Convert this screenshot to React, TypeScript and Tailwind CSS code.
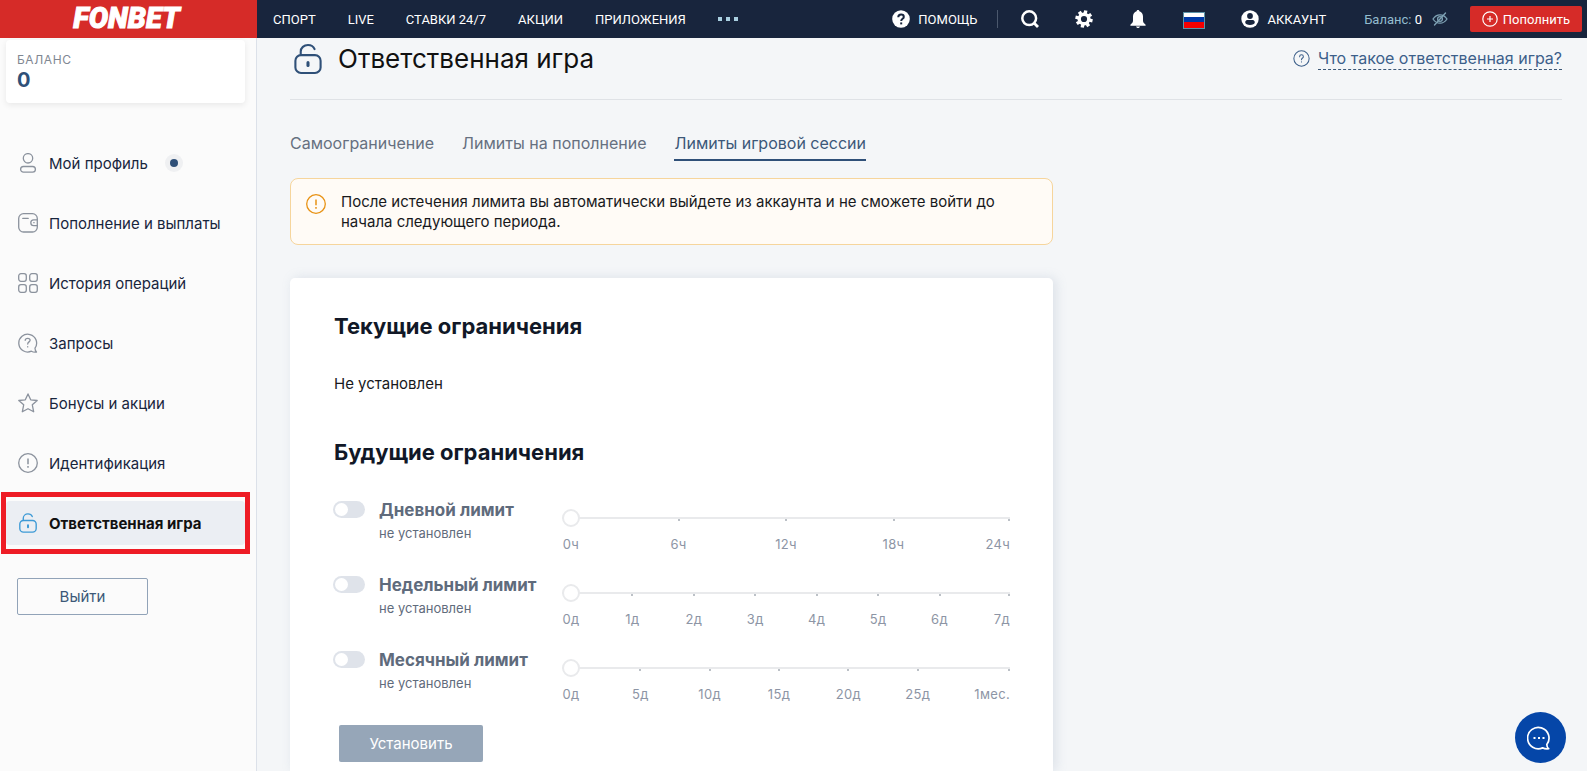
import React, { useState } from 'react';

type IconProps = { className?: string };

const QuestionCircleIcon: React.FC<IconProps> = ({ className }) => (
  <svg className={className} viewBox="0 0 20 20" fill="none" stroke="currentColor" strokeWidth="1.2" strokeLinecap="round" aria-hidden="true">
    <circle cx="10" cy="10" r="9" />
    <path d="M7.8 7.9c0-1.3 1-2.2 2.2-2.2s2.2.9 2.2 2.1c0 1.6-2.2 1.7-2.2 3.7" />
    <path d="M10 13.9v.3" />
  </svg>
);

const HelpFilledIcon: React.FC<IconProps> = ({ className }) => (
  <svg className={className} viewBox="0 0 18 18" fill="none" aria-hidden="true">
    <circle cx="9" cy="9" r="8.8" fill="currentColor" />
    <path d="M6.3 7.2c0-1.6 1.2-2.6 2.8-2.6 1.5 0 2.7.9 2.7 2.3 0 1.9-2.6 1.9-2.6 4" stroke="#18253d" strokeWidth="2" />
    <path d="M8.2 12.4h2v2h-2z" fill="#18253d" />
  </svg>
);

const SearchIcon: React.FC<IconProps> = ({ className }) => (
  <svg className={className} viewBox="0 0 18 18" fill="none" stroke="currentColor" strokeWidth="2.5" aria-hidden="true">
    <circle cx="8.2" cy="8.2" r="6.9" />
    <path d="m12.8 12.8 4.2 4.2" strokeWidth="2.8" />
  </svg>
);

const GearIcon: React.FC<IconProps> = ({ className }) => (
  <svg className={className} viewBox="0 0 18 18" fill="none" stroke="currentColor" aria-hidden="true">
    <circle cx="9" cy="9" r="4.8" strokeWidth="3.4" />
    <path d="M9 .3v3M9 14.7v3M.3 9h3M14.7 9h3M2.9 2.9 5 5M13 13l2.1 2.1M15.1 2.9 13 5M5 13l-2.1 2.1" strokeWidth="3.4" transform="rotate(12 9 9)" />
  </svg>
);

const BellIcon: React.FC<IconProps> = ({ className }) => (
  <svg className={className} viewBox="0 0 18 18" fill="currentColor" aria-hidden="true">
    <path d="M9 0c.8 0 1.3.5 1.4 1.3C12.7 2 14 4 14 6.6v4.1c0 1.8 1.3 2.8 2.6 4v1.1H1.4v-1.1c1.3-1.2 2.6-2.2 2.6-4V6.6C4 4 5.3 2 7.600 1.300 7.700.5 8.200 0 9 0Z" />
    <path d="M7 16.500h4c-.2.900-1 1.500-2 1.500s-1.800-.600-2-1.500Z" />
  </svg>
);

const AccountIcon: React.FC<IconProps> = ({ className }) => (
  <svg className={className} viewBox="0 0 18 18" aria-hidden="true">
    <circle cx="9" cy="9" r="8.700" fill="currentColor" />
    <circle cx="9" cy="6" r="2.900" fill="#18253d" />
    <path d="M4.200 12.300c0-1.600 1.400-2.200 2.800-2.200h4c1.400 0 2.800.6 2.800 2.200 0 1.700-2.300 2.600-4.800 2.600s-4.800-.9-4.800-2.600Z" fill="#18253d" />
  </svg>
);

const FlagIcon: React.FC<IconProps> = ({ className }) => (
  <svg className={className} viewBox="0 0 22 17" aria-hidden="true">
    <path d="M0 0h22v17H0z" fill="#5b93a8" />
    <path d="M1 1h20v4H1z" fill="#fff" />
    <path d="M1 5h20v5H1z" fill="#0039a6" />
    <path d="M1 10h20v6H1z" fill="#f50000" />
  </svg>
);

const HiddenEyeIcon: React.FC<IconProps> = ({ className }) => (
  <svg className={className} viewBox="0 0 16 16" fill="none" stroke="currentColor" strokeWidth="1.3" strokeLinecap="round" aria-hidden="true">
    <path d="M1 8c1.800-2.700 4.200-4.200 7-4.200S13.200 5.300 15 8c-1.800 2.700-4.200 4.200-7 4.200S2.800 10.700 1 8Z" />
    <circle cx="8" cy="8" r="2.4" />
    <path d="M13.500 2 2.500 14" />
  </svg>
);

const PlusCircleIcon: React.FC<IconProps> = ({ className }) => (
  <svg className={className} viewBox="0 0 16 16" fill="none" stroke="currentColor" strokeWidth="1.2" aria-hidden="true">
    <circle cx="8" cy="8" r="7.2" />
    <path d="M8 5v6M5 8h6" />
  </svg>
);

const LockIcon: React.FC<IconProps> = ({ className }) => (
  <svg className={className} viewBox="0 0 20 22" fill="none" stroke="currentColor" strokeWidth="1.5" strokeLinecap="round" aria-hidden="true">
    <rect x="1" y="8.2" width="18" height="12.8" rx="4" />
    <path d="M4.800 8V5.800C4.800 3 7.100 1 10 1c2.200 0 3.900 1 4.700 2.900" />
    <path d="M10 13.600v2" strokeWidth="2.2" />
  </svg>
);

const ProfileIcon: React.FC<IconProps> = ({ className }) => (
  <svg className={className} viewBox="0 0 20 20" fill="none" stroke="currentColor" strokeWidth="1.3" aria-hidden="true">
    <circle cx="10" cy="5.3" r="4.7" />
    <rect x="2.6" y="13.5" width="14.8" height="5.7" rx="2.85" />
  </svg>
);

const WalletIcon: React.FC<IconProps> = ({ className }) => (
  <svg className={className} viewBox="0 0 20 20" fill="none" stroke="currentColor" strokeWidth="1.3" strokeLinecap="round" aria-hidden="true">
    <rect x=".7" y=".7" width="18.6" height="18.3" rx="4.8" />
    <path d="M19 6.800h-3.300a2.900 2.900 0 0 0 0 5.800H19M4.800 5.400h5.400M15.800 9.700h.3" />
  </svg>
);

const GridIcon: React.FC<IconProps> = ({ className }) => (
  <svg className={className} viewBox="0 0 20 20" fill="none" stroke="currentColor" strokeWidth="1.3" aria-hidden="true">
    <rect x=".7" y=".7" width="7.6" height="7.6" rx="2.2" />
    <rect x="11.7" y=".7" width="7.6" height="7.6" rx="2.2" />
    <rect x=".7" y="11.7" width="7.6" height="7.6" rx="2.2" />
    <rect x="11.7" y="11.7" width="7.6" height="7.6" rx="2.2" />
  </svg>
);

const RequestIcon: React.FC<IconProps> = ({ className }) => (
  <svg className={className} viewBox="0 0 20 20" fill="none" stroke="currentColor" strokeWidth="1.3" strokeLinecap="round" strokeLinejoin="round" aria-hidden="true">
    <path d="M17 15.200A8.900 8.900 0 1 0 13.400 18.200c1.400.8 3.200 1.100 5.100.8-.9-.9-1.500-2.300-1.500-3.800Z" />
    <path d="M7.200 7.300c.1-1.300 1.200-2 2.500-2 1.400 0 2.400.8 2.400 2 0 1.600-2.400 1.600-2.400 3.700M9.700 13.600v.3" />
  </svg>
);

const StarIcon: React.FC<IconProps> = ({ className }) => (
  <svg className={className} viewBox="0 0 20 20" fill="none" stroke="currentColor" strokeWidth="1.3" strokeLinejoin="round" aria-hidden="true">
    <path d="m10 .9 2.700 5.900 6.500.7-4.900 4.300 1.400 7-5.700-3.100-5.700 3.100 1.400-7L.8 7.500l6.500-.7L10 .9Z" />
  </svg>
);

const ExclamationIcon: React.FC<IconProps> = ({ className }) => (
  <svg className={className} viewBox="0 0 20 20" fill="none" stroke="currentColor" strokeWidth="1.3" aria-hidden="true">
    <circle cx="10" cy="10" r="9.3" />
    <path d="M10 5.500v5.800M10 13v1.800" strokeWidth="1.5" />
  </svg>
);

const ChatIcon: React.FC<IconProps> = ({ className }) => (
  <svg className={className} viewBox="0 0 24 24" fill="none" stroke="currentColor" strokeWidth="1.7" strokeLinejoin="round" aria-hidden="true">
    <path d="M19.800 18.600A10.700 10.700 0 1 0 15.600 21.900c1.800.8 4 1.100 6.100.8-1.200-.8-1.900-2.300-1.900-4.100Z" />
    <path d="M6.500 12h2M11 12h2M15.500 12h2" strokeWidth="2" />
  </svg>
);

const NAV_LINKS = ['СПОРТ', 'LIVE', 'СТАВКИ 24/7', 'АКЦИИ', 'ПРИЛОЖЕНИЯ'];

const MENU = [
  { label: 'Мой профиль', Icon: ProfileIcon, dot: true },
  { label: 'Пополнение и выплаты', Icon: WalletIcon },
  { label: 'История операций', Icon: GridIcon },
  { label: 'Запросы', Icon: RequestIcon },
  { label: 'Бонусы и акции', Icon: StarIcon },
  { label: 'Идентификация', Icon: ExclamationIcon },
  { label: 'Ответственная игра', Icon: LockIcon, active: true },
];

const TABS = ['Самоограничение', 'Лимиты на пополнение', 'Лимиты игровой сессии'];

const LIMITS = [
  { id: 'day', title: 'Дневной лимит', marks: ['0ч', '6ч', '12ч', '18ч', '24ч'], lastWidth: 'w-[18px]' },
  { id: 'week', title: 'Недельный лимит', marks: ['0д', '1д', '2д', '3д', '4д', '5д', '6д', '7д'], lastWidth: 'w-[18px]' },
  { id: 'month', title: 'Месячный лимит', marks: ['0д', '5д', '10д', '15д', '20д', '25д', '1мес.'], lastWidth: 'w-8' },
];

const Header: React.FC = () => (
  <header className="flex h-[38px] shrink-0 items-center bg-[#18253d] text-[13px] text-white font-[Roboto,sans-serif]">
    <a href="#" className="flex h-full w-[257px] shrink-0 items-center justify-center bg-[#d62b28] pr-1 text-[29px] font-black italic [-webkit-text-stroke:1px_currentColor]">
      FONBET
    </a>
    <nav className="flex items-center gap-8 pl-4">
      {NAV_LINKS.map((link) => (
        <a key={link} href="#" className="pt-[2px] whitespace-nowrap">{link}</a>
      ))}
      <button type="button" aria-label="Ещё" className="flex gap-1">
        <span className="size-1 bg-[#a9cfe0]" />
        <span className="size-1 bg-[#a9cfe0]" />
        <span className="size-1 bg-[#a9cfe0]" />
      </button>
    </nav>
    <div className="ml-auto flex items-center pr-[5px]">
      <a href="#" className="flex items-center gap-2">
        <HelpFilledIcon className="size-[18px]" />
        <span className="pt-[2px]">ПОМОЩЬ</span>
      </a>
      <span className="ml-5 h-[18px] w-px bg-[#4b586d]" />
      <div className="ml-[23px] flex items-center gap-9">
        <button type="button" aria-label="Поиск"><SearchIcon className="size-[18px]" /></button>
        <button type="button" aria-label="Настройки"><GearIcon className="size-[18px]" /></button>
        <button type="button" aria-label="Уведомления"><BellIcon className="size-[18px]" /></button>
        <button type="button" aria-label="Язык" className="pt-[2px]"><FlagIcon className="h-[17px] w-[22px]" /></button>
        <a href="#" className="flex items-center gap-2">
          <AccountIcon className="size-[18px]" />
          <span className="pt-[2px]">АККАУНТ</span>
        </a>
      </div>
      <span className="ml-[38px] pt-[2px] text-[#93bccf]">
        Баланс: <span className="text-white">0</span>
      </span>
      <button type="button" aria-label="Скрыть баланс" className="ml-[10px] text-[#7fa3b5]">
        <HiddenEyeIcon className="size-4" />
      </button>
      <button type="button" className="ml-[22px] flex h-[26px] w-28 items-center justify-center gap-[5px] rounded-xs bg-[#d62b28]">
        <PlusCircleIcon className="size-4" />
        <span className="pt-[2px]">Пополнить</span>
      </button>
    </div>
  </header>
);

const Sidebar: React.FC = () => (
  <aside className="w-[257px] shrink-0 border-r border-[#dce1e9] bg-[#fbfbfb] pt-[2px]">
    <div className="ml-[6px] mr-[11px] h-[63px] rounded bg-white px-[11px] pt-3 shadow-[0_2px_6px_rgba(0,0,0,0.08)]">
      <div className="text-[12px] leading-4 tracking-wider text-[#7f8792]">БАЛАНС</div>
      <div className="text-[20px] leading-6 font-bold text-[#2f5078]">0</div>
    </div>
    <nav className="mt-[38px] ml-[6px] mr-[11px] flex flex-col gap-4">
      {MENU.map(({ label, Icon, dot, active }) => (
        <div key={label} className="relative">
          <a
            href="#"
            className={
              active
                ? 'flex h-11 items-center gap-[11px] rounded bg-[#ebeef3] pl-3 text-[15px] font-bold text-[#111]'
                : 'flex h-11 items-center gap-[11px] pl-3 text-[15px] text-[#18253d]'
            }
          >
            <Icon className={active ? 'size-5 text-[#3d9ad6]' : 'size-5 text-[#8b929d]'} />
            <span className="pt-[2px]">{label}</span>
            {dot && (
              <span className="ml-[6px] flex size-[18px] items-center justify-center rounded-full bg-[#eff0f2]">
                <span className="size-2 rounded-full bg-[#2f5078]" />
              </span>
            )}
          </a>
          {active && <span className="pointer-events-none absolute -inset-x-[5px] -inset-y-[9px] border-[5px] border-[#ee1c25]" />}
        </div>
      ))}
    </nav>
    <button type="button" className="mt-[33px] ml-[17px] h-[37px] w-[131px] rounded-xs border border-[#91a3b8] pt-[2px] text-[15px] text-[#3c5878]">
      Выйти
    </button>
  </aside>
);

type LimitRowProps = { id: string; title: string; marks: string[]; lastWidth: string };

const LimitRow: React.FC<LimitRowProps> = ({ id, title, marks, lastWidth }) => {
  const [enabled, setEnabled] = useState(false);
  const [value, setValue] = useState(0);
  const last = marks.length - 1;

  return (
    <div className="flex h-[75px] items-start">
      <input
        id={id}
        type="checkbox"
        role="switch"
        checked={enabled}
        onChange={(e) => setEnabled(e.target.checked)}
        className="mt-1 flex h-[17px] w-8 shrink-0 appearance-none items-center rounded-full bg-[#dfe3ea] px-[2px] before:size-[13px] before:rounded-full before:bg-white before:content-[''] checked:justify-end checked:bg-[#2f5078]"
      />
      <label htmlFor={id} className="ml-[14px] w-[183px] shrink-0 pt-px">
        <span className="block text-[17px] leading-6 font-bold text-[#5f6b7c]">{title}</span>
        <span className="block text-[13px] leading-[22px] text-[#5f6b7c]">не установлен</span>
      </label>
      <div className="min-w-0 flex-1 pt-3">
        <input
          type="range"
          aria-label={title}
          min={0}
          max={last}
          value={value}
          onChange={(e) => setValue(Number(e.target.value))}
          className="block h-[18px] w-full appearance-none bg-[linear-gradient(#e9eaec,#e9eaec)] bg-[length:100%_2px] bg-center bg-no-repeat [&::-webkit-slider-thumb]:size-[18px] [&::-webkit-slider-thumb]:appearance-none [&::-webkit-slider-thumb]:rounded-full [&::-webkit-slider-thumb]:border-2 [&::-webkit-slider-thumb]:border-solid [&::-webkit-slider-thumb]:border-[#e9eaec] [&::-webkit-slider-thumb]:bg-white"
        />
        <div className="-mt-2 flex justify-between text-[13px] leading-[18px] tracking-wide whitespace-nowrap text-[#8d95a5]">
          {marks.map((mark, i) => (
            <div key={mark} className={`flex flex-col items-center last:items-end ${i === last ? lastWidth : 'w-[18px]'}`}>
              <span className={i === 0 ? 'size-[2px]' : 'size-[2px] bg-[#bcc1c7]'} />
              <span className="mt-[14px]">{mark}</span>
            </div>
          ))}
        </div>
      </div>
    </div>
  );
};

const App: React.FC = () => {
  return (
    <div className="flex min-h-screen flex-col bg-[#f4f6f8] font-[Inter,sans-serif] text-[#18191c]">
      <Header />
      <div className="flex flex-1">
        <Sidebar />
        <main className="flex min-w-0 flex-1 flex-col pr-[25px] pl-[33px]">
          <div className="flex h-[62px] items-start justify-between border-b border-[#dfe2e6] pt-[5px]">
            <h1 className="flex items-center gap-4 pl-1 text-[26px] leading-8 text-[#111]">
              <LockIcon className="h-8 w-7 text-[#2f5078]" />
              Ответственная игра
            </h1>
            <a href="#" className="flex items-center gap-2 pt-1 text-[16px] leading-6 text-[#3c5f8a]">
              <QuestionCircleIcon className="size-[17px]" />
              <span className="border-b border-dashed border-[#3c5878] leading-[22px]">Что такое ответственная игра?</span>
            </a>
          </div>

          <div className="mt-[31px] flex gap-7 text-[16px] leading-6">
            {TABS.map((tab, i) => (
              <button
                key={tab}
                type="button"
                className={i === 2 ? 'border-b-2 border-[#2f5078] pb-1 text-[#3c5878]' : 'border-b-2 border-transparent pb-1 text-[#667080]'}
              >
                {tab}
              </button>
            ))}
          </div>

          <div className="mt-[17px] flex max-w-[763px] items-start gap-[15px] rounded-lg border border-[#f6d59c] bg-[#fffbf6] px-[15px] pt-[13px] pb-3">
            <ExclamationIcon className="mt-[2px] size-5 shrink-0 text-[#e89214]" />
            <p className="text-[15px] leading-5">
              После истечения лимита вы автоматически выйдете из аккаунта и не сможете войти до начала следующего периода.
            </p>
          </div>

          <section className="mt-[33px] max-w-[763px] flex-1 rounded-t-[5px] bg-white pt-8 pr-[43px] pl-11 shadow-[3px_0_12px_rgba(120,140,170,0.2)]">
            <h2 className="text-[22px] leading-8 font-bold text-[#111827]">Текущие ограничения</h2>
            <p className="mt-8 text-[15px] leading-5">Не установлен</p>
            <h2 className="mt-[42px] text-[22px] leading-8 font-bold text-[#111827]">Будущие ограничения</h2>
            <div className="mt-[29px] -ml-px">
              {LIMITS.map((limit) => (
                <LimitRow key={limit.id} {...limit} />
              ))}
            </div>
            <button type="button" className="mt-[3px] ml-[5px] h-[37px] w-36 rounded-xs bg-[#96a6b8] pt-[2px] text-[15px] text-white">
              Установить
            </button>
          </section>
        </main>
      </div>

      <button type="button" aria-label="Чат" className="fixed right-[21px] bottom-2 flex size-[51px] items-center justify-center rounded-full bg-[#0546a8] pr-1 text-white">
        <ChatIcon className="size-6" />
      </button>
    </div>
  );
};

export default App;
